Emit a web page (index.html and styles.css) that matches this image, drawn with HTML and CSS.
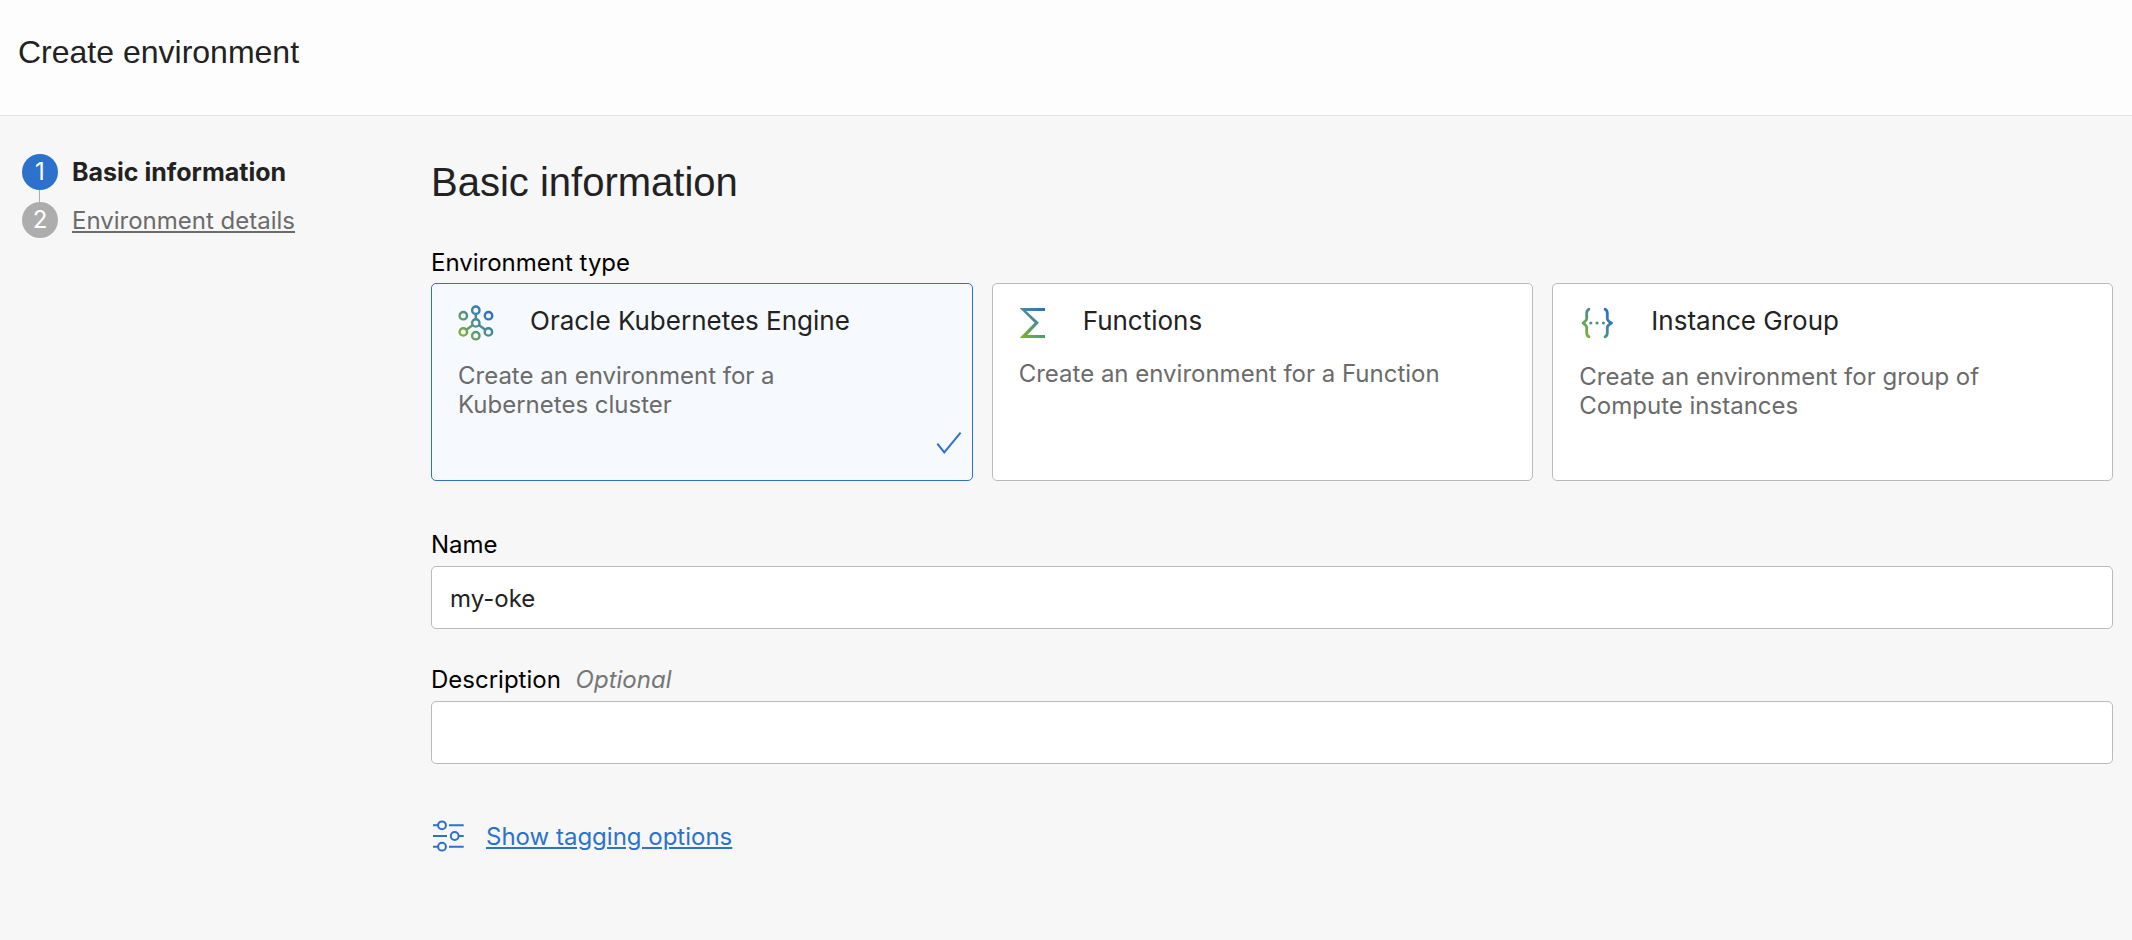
FILE: index.html
```html
<!DOCTYPE html>
<html lang="en">
<head>
<meta charset="utf-8">
<meta name="viewport" content="width=device-width, initial-scale=1">
<title>Create environment</title>
<link rel="stylesheet" href="styles.css">
</head>
<body>
<header class="page-header">
  <h1 class="page-title">Create environment</h1>
</header>
<div class="layout">
  <nav class="steps" aria-label="Steps">
    <ol class="step-list">
      <li class="step step-current" aria-current="step">
        <span class="step-number">1</span>
        <span class="step-name">Basic information</span>
      </li>
      <li class="step">
        <span class="step-number">2</span>
        <a class="step-name" href="#details">Environment details</a>
      </li>
    </ol>
  </nav>
  <main class="content">
    <h2 class="section-title">Basic information</h2>
    <form class="form">
      <fieldset class="field types">
        <legend class="label">Environment type</legend>
        <div class="cards">
          <label class="card">
            <input class="card-radio" type="radio" name="type" value="oke" checked>
            <span class="card-head">
              <svg class="icon-oke" viewBox="0 0 36 36" width="36" height="36" fill="none" stroke="url(#g-oke)" stroke-width="2.4" aria-hidden="true">
                <defs><linearGradient id="g-oke" gradientUnits="userSpaceOnUse" x1="4" y1="31" x2="31" y2="8"><stop offset="0" stop-color="#7ab32e"/><stop offset="0.5" stop-color="#4f9187"/><stop offset="1" stop-color="#2c6fcb"/></linearGradient></defs>
                <circle cx="5.3" cy="10.7" r="3.7"/><circle cx="17.8" cy="5.2" r="3.7"/><circle cx="30.5" cy="10.7" r="3.7"/>
                <circle cx="17.8" cy="17.9" r="3.7"/><circle cx="5.3" cy="26.9" r="3.7"/><circle cx="30.4" cy="26.9" r="3.7"/><circle cx="17.8" cy="30.7" r="3.7"/>
                <path d="M17.7 8.9 17.9 14.2M14.8 20 8.4 24.8M20.8 20 27.3 24.8"/>
              </svg>
              <span class="card-title">Oracle Kubernetes Engine</span>
            </span>
            <span class="card-text">Create an environment for a Kubernetes cluster</span>
            <svg class="card-check" viewBox="0 0 26 24" width="26" height="24" fill="none" stroke="#2c72cc" stroke-width="2" aria-hidden="true"><path d="M1.3 12.6 8.3 21.3 24.6 1.7"/></svg>
          </label>
          <label class="card">
            <input class="card-radio" type="radio" name="type" value="functions">
            <span class="card-head">
              <svg class="icon-fn" viewBox="0 0 28 34" width="28" height="34" aria-hidden="true">
                <defs><linearGradient id="g-fn" gradientUnits="userSpaceOnUse" x1="3" y1="32" x2="26" y2="4"><stop offset="0" stop-color="#7ab32e"/><stop offset="0.5" stop-color="#4f9187"/><stop offset="1" stop-color="#2c6fcb"/></linearGradient></defs>
                <path fill="url(#g-fn)" d="M.7 3H26V6H7.2L20 17.7 8.2 30H26V33H.7L15.6 17.7Z"/>
              </svg>
              <span class="card-title">Functions</span>
            </span>
            <span class="card-text">Create an environment for a Function</span>
          </label>
          <label class="card">
            <input class="card-radio" type="radio" name="type" value="instance-group">
            <span class="card-head">
              <svg class="icon-group" viewBox="0 0 36 37" width="36" height="37" fill="none" stroke="url(#g-ig)" stroke-width="2.8" stroke-linecap="round" stroke-linejoin="round" aria-hidden="true">
                <defs><linearGradient id="g-ig" gradientUnits="userSpaceOnUse" x1="5" y1="30" x2="31" y2="10"><stop offset="0" stop-color="#7ab32e"/><stop offset="0.5" stop-color="#4f9187"/><stop offset="1" stop-color="#2c6fcb"/></linearGradient></defs>
                <path d="M9.9 4.2C8.4 5 7.7 6 7.7 8V13.4C7.7 15.6 6.3 16.4 4.1 18 6.3 19.6 7.7 20.4 7.7 22.6V28C7.7 30 8.4 31 9.9 31.8M26.1 4.2C27.6 5 28.3 6 28.3 8V13.4C28.3 15.6 29.7 16.4 32.5 18 29.7 19.6 28.3 20.4 28.3 22.6V28C28.3 30 27.6 31 26.1 31.8"/>
                <g stroke="none" fill="#4f9187"><circle cx="11.8" cy="18" r="1.6"/><circle cx="18" cy="18" r="1.6"/><circle cx="24.4" cy="18" r="1.6"/></g>
              </svg>
              <span class="card-title">Instance Group</span>
            </span>
            <span class="card-text">Create an environment for group of Compute instances</span>
          </label>
        </div>
      </fieldset>
      <div class="field">
        <label class="label" for="name">Name</label>
        <input class="input" id="name" type="text" value="my-oke">
      </div>
      <div class="field">
        <label class="label" for="description">Description <em class="optional">Optional</em></label>
        <input class="input" id="description" type="text">
      </div>
      <div class="tagging">
        <svg class="icon-tagging" viewBox="0 0 34 34" width="34" height="34" fill="none" stroke="#2c72cc" stroke-width="2" aria-hidden="true">
          <circle cx="11" cy="6.3" r="3.9"/><circle cx="23.7" cy="17" r="3.9"/><circle cx="11" cy="27.7" r="3.9"/>
          <path d="M2 6.3H7M18 6.3H32.7M2 17H16M27.6 17H32.7M2 27.7H7M18 27.7H32.7"/>
        </svg>
        <a class="tagging-link" href="#tagging">Show tagging options</a>
      </div>
    </form>
  </main>
</div>
</body>
</html>
```
FILE: styles.css
```css
* {
  box-sizing: border-box;
}

body {
  margin: 0;
  min-height: 100vh;
  background: #f7f7f7;
  color: #222;
  font-family: Inter, "Liberation Sans", sans-serif;
  font-size: 24px;
  line-height: 29px;
}

.page-header {
  padding: 33px 18px 44px;
  border-bottom: 1px solid #e3e3e3;
  background: #fdfdfd;
}

.page-title,
.section-title {
  margin: 0;
  font-family: "Liberation Sans", Arial, sans-serif;
  font-weight: 400;
}

.page-title {
  font-size: 32px;
  line-height: 38px;
}

.section-title {
  font-size: 40px;
  line-height: 46px;
}

.layout {
  display: grid;
  grid-template-columns: 390px minmax(0, 1fr);
  column-gap: 19px;
  padding: 38px 19px 38px 22px;
}

.step-list {
  display: flex;
  flex-direction: column;
  gap: 12px;
  margin: 0;
  padding: 0;
  list-style: none;
}

.step {
  position: relative;
  display: flex;
  align-items: center;
  gap: 14px;
}

.step + .step::before {
  content: "";
  position: absolute;
  top: -12px;
  left: 17px;
  width: 1px;
  height: 12px;
  background: #adadad;
}

.step-number {
  width: 36px;
  height: 36px;
  border-radius: 50%;
  background: #adadad;
  color: #fff;
  line-height: 36px;
  text-align: center;
}

.step-name {
  color: #6b6b6b;
}

.step-current .step-number {
  background: #2c72cc;
}

.step-current .step-name {
  color: #222;
  font-size: 25px;
  font-weight: 700;
}

.content {
  padding-top: 5px;
}

.form {
  display: flex;
  flex-direction: column;
  gap: 36px;
  padding-top: 43px;
}

.field {
  display: flex;
  flex-direction: column;
  gap: 7px;
  margin: 0;
  padding: 0;
  border: 0;
  min-width: 0;
}

.types {
  display: block;
  padding-bottom: 13px;
}

.label {
  padding: 0;
  color: #000;
}

.optional {
  margin-left: 8px;
  color: #767676;
}

.cards {
  display: grid;
  grid-template-columns: repeat(3, minmax(0, 1fr));
  padding-top: 6px;
}

.card {
  position: relative;
  display: flex;
  flex-direction: column;
  gap: 20px;
  min-height: 198px;
  padding: 21px 26px;
  border: 1px solid #b9bbc1;
  border-radius: 5px;
  background: #fff;
  cursor: pointer;
}

.card:not(:last-child) {
  margin-right: 19px;
}

.card:has(:checked) {
  border-color: #2c72cc;
  background: #f6f9fe;
}

.card-radio {
  position: absolute;
  inset: 0;
  margin: 0;
  opacity: 0;
  cursor: pointer;
}

.card-head {
  display: flex;
  align-items: flex-start;
  gap: 36px;
}

.card-title {
  font-size: 26px;
  line-height: 32px;
}

.card-text {
  max-width: 440px;
  color: #6b6b6b;
}

.card-check {
  position: absolute;
  right: 10px;
  bottom: 25px;
}

.input {
  width: 100%;
  height: 63px;
  padding: 2px 18px 0;
  border: 1px solid #b9bbc1;
  border-radius: 5px;
  background: #fff;
  color: #222;
  font: inherit;
}

.tagging {
  display: flex;
  align-items: center;
  gap: 21px;
  padding-top: 19px;
}

.tagging-link {
  color: #2c72cc;
}
```
